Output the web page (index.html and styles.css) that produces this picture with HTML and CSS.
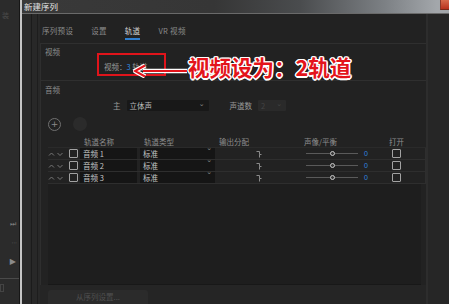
FILE: index.html
```html
<!DOCTYPE html>
<html lang="zh-CN">
<head>
<meta charset="utf-8">
<title>新建序列</title>
<link rel="stylesheet" href="styles.css">
</head>
<body>
<div class="bgapp">
  <div class="bg-label">装</div>
  <div class="bg-tools">
    <span class="tool">⏭</span>
    <span class="tool dots">· · ·</span>
    <span class="tool play">▶</span>
    <div class="bg-rule"></div>
    <div class="bg-box"></div>
  </div>
</div>
<div class="win">
  <div class="titlebar">
    <span class="title">新建序列</span>
    <span class="close"></span>
  </div>
  <div class="winbody">
    <div class="frame-left"></div>
    <div class="content">
      <nav class="tabs">
        <span class="tab">序列预设</span>
        <span class="tab">设置</span>
        <span class="tab active">轨道</span>
        <span class="tab">VR 视频</span>
      </nav>
      <div class="panel">
        <section class="sec video">
          <div class="sec-title">视频</div>
          <div class="video-row">视频：<span class="num">3</span> 轨道</div>
        </section>
        <section class="sec audio">
          <div class="sec-title">音频</div>
          <div class="master">
            <span class="lbl main-lbl">主</span>
            <span class="select wide">立体声<span class="chev">⌄</span></span>
            <span class="lbl ch-lbl">声道数</span>
            <span class="select small off">2<span class="chev">⌄</span></span>
          </div>
          <div class="addrow">
            <span class="circle plus">+</span>
            <span class="circle minus"></span>
          </div>
          <div class="table">
            <div class="trow head">
              <span></span><span></span>
              <span class="h">轨道名称</span>
              <span class="h">轨道类型</span>
              <span class="h">输出分配</span>
              <span class="h">声像/平衡</span>
              <span class="h open-h">打开</span>
            </div>
            <div class="trow">
              <span class="arrows"><svg width="16" height="6" viewBox="0 0 16 6"><path d="M1 4.5L3.5 2 6 4.5M9.5 2L12 4.5 14.5 2" fill="none" stroke="#777" stroke-width="1"/></svg></span>
              <span class="cb-cell"><span class="cb"></span></span>
              <span class="field">音频 1</span>
              <span class="field type">标准<span class="chev">⌄</span></span>
              <span class="out"><svg width="6" height="8" viewBox="0 0 6 8"><path d="M0.5 1.5h3v3h2M3.5 4.5v3" fill="none" stroke="#8a8a8a" stroke-width="1"/></svg></span>
              <span class="pan"><span class="slider"><span class="knob"></span></span><span class="pv">0</span></span>
              <span class="open"><span class="cb"></span></span>
            </div>
            <div class="trow">
              <span class="arrows"><svg width="16" height="6" viewBox="0 0 16 6"><path d="M1 4.5L3.5 2 6 4.5M9.5 2L12 4.5 14.5 2" fill="none" stroke="#777" stroke-width="1"/></svg></span>
              <span class="cb-cell"><span class="cb"></span></span>
              <span class="field">音频 2</span>
              <span class="field type">标准<span class="chev">⌄</span></span>
              <span class="out"><svg width="6" height="8" viewBox="0 0 6 8"><path d="M0.5 1.5h3v3h2M3.5 4.5v3" fill="none" stroke="#8a8a8a" stroke-width="1"/></svg></span>
              <span class="pan"><span class="slider"><span class="knob"></span></span><span class="pv">0</span></span>
              <span class="open"><span class="cb"></span></span>
            </div>
            <div class="trow">
              <span class="arrows"><svg width="16" height="6" viewBox="0 0 16 6"><path d="M1 4.5L3.5 2 6 4.5M9.5 2L12 4.5 14.5 2" fill="none" stroke="#777" stroke-width="1"/></svg></span>
              <span class="cb-cell"><span class="cb"></span></span>
              <span class="field">音频 3</span>
              <span class="field type">标准<span class="chev">⌄</span></span>
              <span class="out"><svg width="6" height="8" viewBox="0 0 6 8"><path d="M0.5 1.5h3v3h2M3.5 4.5v3" fill="none" stroke="#8a8a8a" stroke-width="1"/></svg></span>
              <span class="pan"><span class="slider"><span class="knob"></span></span><span class="pv">0</span></span>
              <span class="open"><span class="cb"></span></span>
            </div>
          </div>
          <div class="table-space"></div>
        </section>
      </div>
      <div class="footer"><span class="btn">从序列设置...</span></div>
    </div>
    <div class="frame-right"></div>
  </div>
</div>

<div class="redbox"></div>
<svg class="arrow" width="56" height="14" viewBox="0 0 56 14">
  <path d="M54 7H10" stroke="#fff" stroke-width="4.5" fill="none"/>
  <path d="M12 1.5L2 7l10 5.5" stroke="#fff" stroke-width="4.5" fill="none" stroke-linejoin="round"/>
  <path d="M54 7H10" stroke="#e3141b" stroke-width="2" fill="none"/>
  <path d="M12 1.5L2 7l10 5.5" stroke="#e3141b" stroke-width="2" fill="none"/>
</svg>
<div class="annot">视频设为：2轨道</div>
</body>
</html>
```
FILE: styles.css
```css
* { box-sizing: border-box; }
html, body { margin: 0; padding: 0; }
body {
  width: 449px;
  height: 304px;
  overflow: hidden;
  display: flex;
  background: #2b2b2b;
  font-family: "Noto Sans CJK SC", "Noto Sans", sans-serif;
  font-size: 7.5px;
  color: #8c8c8c;
  position: relative;
}

/* background application on the left */
.bgapp {
  width: 20px;
  display: flex;
  flex-direction: column;
  justify-content: space-between;
  background: #2b2b2b;
  border-right: 1px solid #161616;
}
.bg-label {
  color: #4a4a4a;
  font-size: 7px;
  margin-top: 10px;
  margin-left: 2px;
}
.bg-tools {
  display: flex;
  flex-direction: column;
  align-items: flex-end;
  padding-right: 3px;
  padding-bottom: 12px;
  gap: 9px;
}
.tool { color: #7a7a7a; font-size: 7px; line-height: 10px; font-family: "DejaVu Sans", sans-serif; }
.tool.dots { font-size: 6px; letter-spacing: -1px; color: #666; }
.tool.play { color: #8a8a8a; font-size: 8px; }
.bg-rule { width: 19px; margin-right: -3px; height: 1px; background: #4a4a4a; margin-top: 2px; }
.bg-box { align-self: flex-start; width: 4px; height: 8px; border: 1px solid #444; margin-top: -4px; }

/* window */
.win {
  flex: 1;
  display: flex;
  flex-direction: column;
  border-left: 2px solid #c4c4c4;
}
.titlebar {
  height: 14px;
  display: flex;
  align-items: flex-start;
  background: linear-gradient(90deg, #393939 0%, #363636 45%, #4a4c4e 65%, #7d8185 85%, #a3a7ab 97%);
  border-bottom: 1px solid #6a6a6a;
}
.title {
  color: #e4e4e4;
  font-size: 8.5px;
  line-height: 12px;
  margin-left: 2px;
}
.close {
  margin-left: auto;
  width: 10px;
  height: 10px;
  background: linear-gradient(#d66a4c, #b8321d);
  border-left: 1px solid #8a3a2a;
  border-bottom: 1px solid #7a2a1a;
}
.winbody {
  flex: 1;
  display: flex;
  background: #252525;
}
.frame-left {
  width: 18px;
  background:
    linear-gradient(90deg, transparent 9px, #1b1b1b 9px, #1b1b1b 10px, transparent 10px, transparent 15px, #1d1d1d 15px, #1d1d1d 16px, transparent 16px),
    #282828;
}
.frame-right {
  width: 24px;
  background: #262626;
  border-left: 2px solid #2d2d2d;
}
.content {
  flex: 1;
  display: flex;
  flex-direction: column;
  background: #222;
}

/* tabs */
.tabs {
  height: 29px;
  display: flex;
  align-items: center;
  gap: 18px;
  padding: 4px 0 0 2px;
}
.tab {
  line-height: 10px;
  padding-bottom: 2px;
  color: #8a8a8a;
  letter-spacing: 0.3px;
  border-bottom: 2px solid transparent;
  margin-top: 4px;
}
.tab.active {
  color: #d2d2d2;
  border-bottom-color: #2f7fd0;
}

/* panel with sections */
.panel {
  flex: 1;
  display: flex;
  flex-direction: column;
  border-top: 1px solid #2f2f2f;
  border-left: 1px solid #2e2e2e;
}
.sec-title {
  height: 16px;
  line-height: 16px;
  padding-left: 4px;
  color: #8e8e8e;
}
.video {
  border-bottom: 1px solid #2f2f2f;
}
.video-row {
  height: 20px;
  line-height: 10px;
  padding-left: 63px;
  padding-top: 2px;
  color: #9a9a9a;
}
.num { color: #2f86e0; }

.audio {
  flex: 1;
  display: flex;
  flex-direction: column;
  padding-top: 1px;
}
.master {
  height: 15px;
  display: flex;
  align-items: center;
}
.lbl { color: #9a9a9a; }
.main-lbl { margin-left: 72px; }
.select {
  height: 11px;
  display: flex;
  align-items: center;
  justify-content: space-between;
  background: #181818;
  color: #bdbdbd;
  padding: 0 4px 0 3px;
  border-radius: 1px;
}
.select.wide { width: 82px; margin-left: 6px; }
.ch-lbl { margin-left: 21px; }
.select.small { width: 28px; margin-left: 6px; background: #2a2a2a; color: #444; }
.chev { color: #8a8a8a; font-size: 7px; line-height: 6px; margin-top: -3px; font-family: "DejaVu Sans", sans-serif; }
.select.off .chev { color: #444; }

.addrow {
  height: 22px;
  display: flex;
  align-items: center;
  gap: 12px;
  padding-left: 7px;
}
.circle {
  width: 13px;
  height: 13px;
  border-radius: 50%;
  display: flex;
  align-items: center;
  justify-content: center;
}
.plus { border: 1px solid #707070; color: #8a8a8a; font-size: 9px; line-height: 9px; font-family: "DejaVu Sans", sans-serif; }
.minus { background: #2b2b2b; width: 14px; height: 14px; }

.table {
  margin-left: 7px;
  width: 378px;
}
.trow {
  display: grid;
  grid-template-columns: 19px 13px 60px 77px 85px 82px 42px;
  height: 12px;
  align-items: center;
  border-bottom: 1px solid #2e2e2e;
  border-right: 1px solid #2e2e2e;
}
.trow.head {
  height: 13px;
  border-right: none;
  border-bottom-color: #2a2a2a;
}
.h { color: #8e8e8e; padding-left: 4px; line-height: 11px; }
.trow.head .h:nth-child(5), .trow.head .h:nth-child(6) { padding-left: 2px; }
.open-h { padding-left: 5px !important; }
.arrows {
  display: flex;
  align-items: center;
  padding-left: 0;
}
.cb-cell { display: flex; align-items: center; padding-left: 2px; }
.cb {
  width: 9px;
  height: 9px;
  border: 1px solid #a2a2a2;
  border-radius: 1px;
}
.field {
  height: 11px;
  line-height: 11px;
  background: #151515;
  color: #c4c4c4;
  padding-left: 3px;
  margin-right: 3px;
}
.field.type {
  display: flex;
  justify-content: space-between;
  padding-right: 3px;
  margin-right: 2px;
}
.out {
  height: 11px;
  display: flex;
  align-items: center;
  padding-left: 39px;
}
.pan {
  display: flex;
  align-items: center;
  padding-left: 4px;
}
.slider {
  width: 52px;
  height: 1px;
  background: #5a5a5a;
  display: flex;
  align-items: center;
}
.knob {
  width: 5px;
  height: 5px;
  border-radius: 50%;
  border: 1px solid #c8c8c8;
  background: #3a3a3a;
  margin-left: 24px;
  flex: none;
}
.pv {
  color: #2f86e0;
  margin-left: 6px;
  font-family: "Liberation Sans", sans-serif;
  font-size: 7px;
}
.open { display: flex; padding-left: 8px; }
.table-space {
  flex: 1;
  margin-left: 7px;
  margin-right: 5px;
  background: #1e1e1e;
  border-bottom: 1px solid #181818;
}

/* footer */
.footer {
  height: 19px;
  display: flex;
  align-items: flex-end;
  padding-left: 8px;
  background: #252525;
}
.btn {
  width: 100px;
  height: 14px;
  line-height: 14px;
  text-align: center;
  background: #2b2b2b;
  color: #505050;
  border-radius: 3px 3px 0 0;
}

/* annotation overlays */
.redbox {
  position: absolute;
  left: 97px;
  top: 53px;
  width: 69px;
  height: 23px;
  border: 2px solid #e0141b;
}
.arrow {
  position: absolute;
  left: 133px;
  top: 64px;
}
.annot {
  position: absolute;
  left: 188px;
  top: 53px;
  font-size: 21.5px;
  line-height: 28px;
  font-weight: 700;
  color: #e3141b;
  text-shadow:
    1.5px 0 0 #fff, -1.5px 0 0 #fff, 0 1.5px 0 #fff, 0 -1.5px 0 #fff,
    1px 1px 0 #fff, -1px 1px 0 #fff, 1px -1px 0 #fff, -1px -1px 0 #fff;
}
```
